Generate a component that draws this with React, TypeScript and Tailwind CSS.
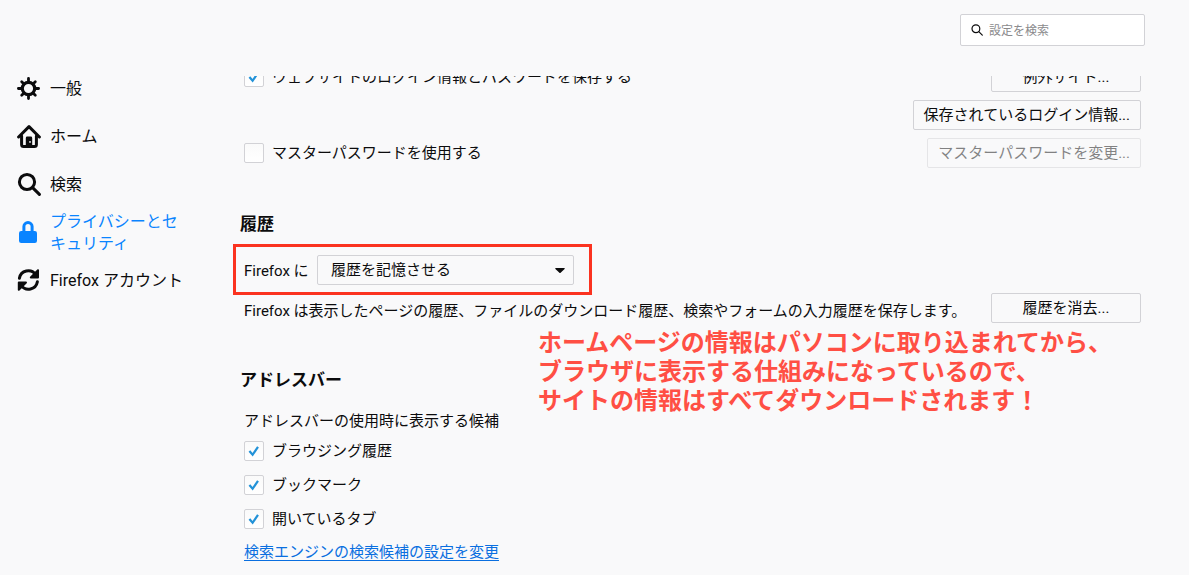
import clsx from 'clsx'
import React from 'react'

interface IconProps {
  className?: string
}

function GearIcon({ className }: IconProps): React.ReactElement {
  return (
    <svg
      viewBox="0 0 24 24"
      fill="none"
      stroke="currentColor"
      strokeLinecap="round"
      className={className}>
      <circle cx="11.5" cy="12.5" r="6.2" strokeWidth="3.2" />
      <path
        strokeWidth="2.8"
        d="M11.5 5.5V2.4M11.5 19.5v3.1M4.5 12.5H1.4M18.5 12.5h3.1M6.5 7.5 4.7 5.7M16.5 7.5l1.8-1.8M6.5 17.5l-1.8 1.8M16.5 17.5l1.8 1.8"
      />
    </svg>
  )
}

function HomeIcon({ className }: IconProps): React.ReactElement {
  return (
    <svg
      viewBox="0 0 24 24"
      fill="none"
      stroke="currentColor"
      strokeWidth="3"
      strokeLinecap="round"
      strokeLinejoin="round"
      className={className}>
      <path d="M1.6 13 12 2.6 22.4 13" />
      <path d="M4.6 12v8.4a2 2 0 0 0 2 2h10.8a2 2 0 0 0 2-2V12" />
      <path
        fill="currentColor"
        stroke="none"
        fillRule="evenodd"
        d="M8.8 22.4v-8.4a1.4 1.4 0 0 1 1.4-1.4h3.6a1.4 1.4 0 0 1 1.4 1.4v8.4zM13 17a.9.9 0 1 0 0 1.8.9.9 0 0 0 0-1.8z"
      />
    </svg>
  )
}

function SearchIcon({ className }: IconProps): React.ReactElement {
  return (
    <svg
      viewBox="0 0 24 24"
      fill="none"
      stroke="currentColor"
      strokeWidth="3"
      strokeLinecap="round"
      className={className}>
      <circle cx="10" cy="10" r="7.6" />
      <path d="m15.6 15.6 6.8 6.8" />
    </svg>
  )
}

function LockIcon({ className }: IconProps): React.ReactElement {
  return (
    <svg viewBox="0 0 24 24" fill="none" className={className}>
      <rect x="2" y="11" width="18" height="12" rx="2.2" fill="currentColor" />
      <path
        stroke="currentColor"
        strokeWidth="3"
        d="M6.9 12V6.6a4.1 4.1 0 0 1 8.2 0V12"
      />
    </svg>
  )
}

function SyncIcon({ className }: IconProps): React.ReactElement {
  return (
    <svg
      viewBox="0 0 24 24"
      fill="none"
      stroke="currentColor"
      strokeWidth="3"
      strokeLinecap="round"
      className={className}>
      <path d="M2.4 10.2A9 9 0 0 1 18.6 6.6M20.4 13.8A9 9 0 0 1 4.2 17.4" />
      <path
        fill="currentColor"
        stroke="none"
        d="M22 2.2v7.2a1 1 0 0 1-1 1h-7.2c-.9 0-1.3-1-.7-1.7l7.2-7.2c.6-.6 1.7-.2 1.7.7zM.8 21.8v-7.2a1 1 0 0 1 1-1H9c.9 0 1.3 1 .7 1.7l-7.2 7.2c-.6.6-1.7.2-1.7-.7z"
      />
    </svg>
  )
}

const categories = [
  { href: '#general', label: '一般', icon: GearIcon },
  { href: '#home', label: 'ホーム', icon: HomeIcon },
  { href: '#search', label: '検索', icon: SearchIcon },
  {
    href: '#privacy',
    label: 'プライバシーとセキュリティ',
    icon: LockIcon,
    active: true
  },
  { href: '#sync', label: 'Firefox アカウント', icon: SyncIcon }
]

const suggestions = ['ブラウジング履歴', 'ブックマーク', '開いているタブ']

interface CheckboxProps {
  label: string
  defaultChecked?: boolean
}

function Checkbox({ label, defaultChecked }: CheckboxProps): React.ReactElement {
  return (
    <label className="flex items-center gap-2">
      <span className="grid size-5">
        <input
          type="checkbox"
          defaultChecked={defaultChecked}
          className="peer col-start-1 row-start-1 size-5 appearance-none rounded-xs border border-[#d2d2d6] bg-linear-to-b from-[#fafafa] to-white"
        />
        <svg
          viewBox="0 0 20 20"
          fill="none"
          stroke="#2292d8"
          strokeWidth="2.2"
          className="pointer-events-none invisible col-start-1 row-start-1 size-5 peer-checked:visible">
          <path d="m5.4 10 3.2 3.8 5.4-8" />
        </svg>
      </span>
      <span>{label}</span>
    </label>
  )
}

interface ButtonProps {
  children: React.ReactNode
  disabled?: boolean
}

function Button({ children, disabled }: ButtonProps): React.ReactElement {
  return (
    <button
      type="button"
      disabled={disabled}
      className="h-[30px] min-w-[150px] shrink-0 rounded-xs border border-[#d2d2d6] px-[10px] leading-5 disabled:opacity-50">
      {children}
    </button>
  )
}

function Sidebar(): React.ReactElement {
  return (
    <nav className="w-56 shrink-0 pt-16 pl-[17px]">
      <ul>
        {categories.map(({ href, label, icon: Icon, active }) => (
          <li key={href}>
            <a
              href={href}
              className={clsx(
                'flex h-12 items-center gap-[9px] text-base leading-[22px]',
                active && 'text-[#0a84ff]'
              )}>
              <Icon className="size-6 shrink-0" />
              <span className="w-[140px] pt-[2px]">{label}</span>
            </a>
          </li>
        ))}
      </ul>
    </nav>
  )
}

export default function App(): React.ReactElement {
  return (
    <div className="flex min-h-screen bg-[#f9f9fa] font-['Roboto','Noto_Sans_CJK_JP',sans-serif] text-[15px] leading-5 text-[#0c0c0d]">
      <Sidebar />
      <div className="min-w-0 flex-1">
        <header className="flex h-[76px] justify-end pt-[14px] pr-11">
          <label className="flex h-8 w-[185px] items-center gap-[6px] rounded-xs border border-[#d2d2d6] bg-white px-[10px]">
            <svg
              viewBox="0 0 12 12"
              fill="none"
              stroke="currentColor"
              strokeWidth="1.2"
              strokeLinecap="round"
              className="size-3 shrink-0">
              <circle cx="4.9" cy="4.7" r="3.9" />
              <path d="m7.8 7.6 3.5 3.5" />
            </svg>
            <input
              type="search"
              aria-label="設定を検索"
              placeholder="設定を検索"
              className="w-full min-w-0 pt-[2px] text-xs outline-none placeholder:text-[#8a8a8c]"
            />
          </label>
        </header>

        <main className="overflow-hidden pr-12 pb-3 pl-4">
          {/* scrolled so that the first row is cut by the header */}
          <section className="-mt-[14px] flex flex-col gap-2 pl-1">
            <div className="flex items-center justify-between">
              <Checkbox
                label="ウェブサイトのログイン情報とパスワードを保存する"
                defaultChecked
              />
              <Button>例外サイト...</Button>
            </div>
            <div className="flex justify-end">
              <Button>保存されているログイン情報...</Button>
            </div>
            <div className="flex items-center justify-between">
              <Checkbox label="マスターパスワードを使用する" />
              <Button disabled>マスターパスワードを変更...</Button>
            </div>
          </section>

          <section className="relative mt-11">
            <h2 className="text-[17px] leading-6 font-bold">履歴</h2>
            <div className="relative mt-[19px] ml-1 flex w-[330px] items-center justify-between">
              <label htmlFor="history-mode" className="pt-[2px]">
                Firefox に
              </label>
              <span className="grid w-[257px] items-center">
                <select
                  id="history-mode"
                  className="col-start-1 row-start-1 h-[30px] appearance-none rounded-xs border border-[#d2d2d6] px-[13px] leading-5">
                  <option>履歴を記憶させる</option>
                  <option>履歴を一切記憶させない</option>
                  <option>記憶させる履歴を詳細設定する</option>
                </select>
                <svg
                  viewBox="0 0 10 5"
                  fill="currentColor"
                  className="pointer-events-none col-start-1 row-start-1 mr-[9px] h-[5px] w-[10px] justify-self-end">
                  <path d="M.8 0h8.4c.6 0 .8.6.4 1L5.6 4.7c-.4.4-.8.4-1.2 0L.4 1C0 .6.2 0 .8 0z" />
                </svg>
              </span>
              <div className="pointer-events-none absolute -top-[11px] -right-[18px] -bottom-[10px] -left-[11px] border-3 border-[#fb3320]" />
            </div>
            <div className="mt-2 ml-1 flex items-center justify-between">
              <p className="pt-[6px]">
                Firefox は表示したページの履歴、ファイルのダウンロード履歴、検索やフォームの入力履歴を保存します。
              </p>
              <Button>履歴を消去...</Button>
            </div>
            <p className="absolute top-[117px] left-[298px] text-2xl leading-[29px] font-bold whitespace-nowrap text-[#ff4f44]">
              ホームページの情報はパソコンに取り込まれてから、
              <br />
              ブラウザに表示する仕組みになっているので、
              <br />
              サイトの情報はすべてダウンロードされます！
            </p>
          </section>

          <section className="mt-[45px]">
            <h2 className="text-[17px] leading-6 font-bold">アドレスバー</h2>
            <div className="mt-[19px] pl-1">
              <p>アドレスバーの使用時に表示する候補</p>
              <div className="mt-[10px] flex flex-col gap-[14px]">
                {suggestions.map((label) => (
                  <Checkbox key={label} label={label} defaultChecked />
                ))}
              </div>
              <a
                href="#search"
                className="mt-[13px] inline-block text-[#0a6fe0] underline underline-offset-3">
                検索エンジンの検索候補の設定を変更
              </a>
            </div>
          </section>
        </main>
      </div>
    </div>
  )
}
